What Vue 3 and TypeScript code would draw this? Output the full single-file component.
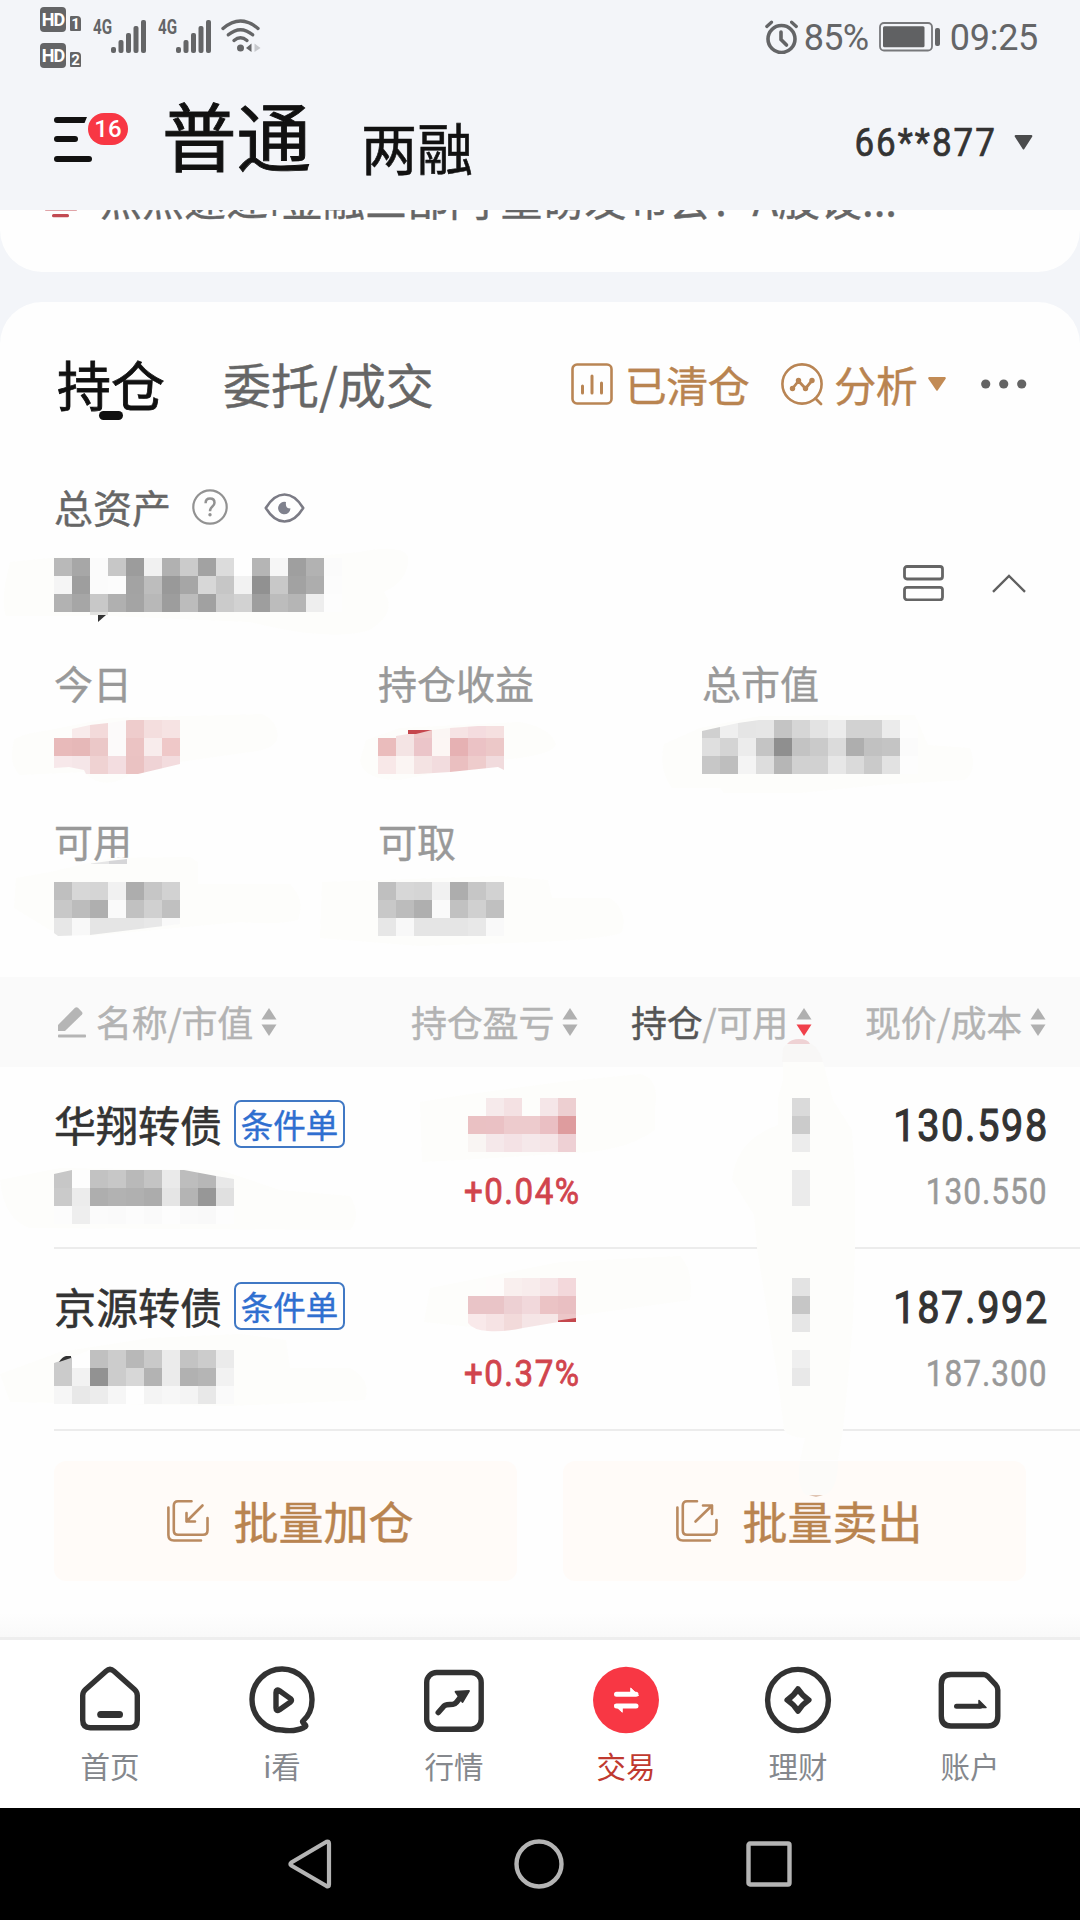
<script setup lang="ts">
import { h, type FunctionalComponent } from 'vue'

interface MosaicProps {
  rows: string[]
  clip?: string
}

const CELL = 18

// Pixelated block that hides a private value. Each row is a list of cell
// colours: two digits are a grey level, six digits a full colour, "-" is empty.
const Mosaic: FunctionalComponent<MosaicProps> = (props) => {
  const grid = props.rows.map((r) => r.split(' '))
  const width = Math.max(...grid.map((r) => r.length)) * CELL
  const height = grid.length * CELL
  const cells = grid.flatMap((row, y) =>
    row.map((c, x) =>
      c === '-'
        ? null
        : h('rect', {
            x: x * CELL,
            y: y * CELL,
            width: CELL,
            height: CELL,
            fill: '#' + (c.length === 2 ? c + c + c : c),
          }),
    ),
  )
  return h(
    'svg',
    {
      width,
      height,
      viewBox: `0 0 ${width} ${height}`,
      'shape-rendering': 'crispEdges',
      style: props.clip ? { clipPath: `path('${props.clip}')`, display: 'block' } : { display: 'block' },
    },
    cells,
  )
}
Mosaic.props = ['rows', 'clip']

const total = [
  'b9 a7 fb c7 9c f1 b1 cb a2 dc fe b5 f6 9f b2 fb',
  'f5 9e fb fc a3 bd 99 a6 d7 c6 f2 91 c8 a2 ad fc',
  'b2 a6 c8 b0 a4 b8 9d bc a1 cb d2 9e bc b5 ee fd',
]

const cash = ['bf d7 d5 f1 ad c6 d2', 'c8 bc af fa c1 d0 c0', 'e7 f8 e5 e5 e5 e8 f9']

interface Stat {
  label: string
  rows: string[]
  clip?: string
}

const stats: Stat[] = [
  {
    label: '今日',
    rows: [
      '- f8ebeb f3dada fcfafa eecccc f4dede f6e3e3',
      'e8baba e6b8b8 ebc8c8 fcfafa ebc3c3 f8ecec efc8c8',
      'f7e8ea f5e6e8 efd2d2 f3dde0 eac2c2 efd3d5 f3dcde',
    ],
    clip: 'M0 18H18V9L36 5L54 3L75 0H126V44L84 54H32L30 50L15 47L0 48Z',
  },
  {
    label: '持仓收益',
    rows: [
      '- f5e3e3 eecaca fbf6f4 f6e3e4 f4dcdf f5e0e0',
      'eabcbc f4e4e4 ebc5c9 fcf6f4 e6b1b3 ebc2c5 ecc8c8',
      'f8e8e8 fbf5f3 f4e3e3 f2dcde eabfc0 eecccc f1dbdd',
    ],
    clip: 'M0 18L18 16L54 10L72 8L100 6H126V50L120 47L72 52L40 54H0Z',
  },
  {
    label: '总市值',
    rows: [
      'd0 ef e5 e6 c4 d6 e3 ec d2 d2 eb fd',
      'df d4 ec c4 8f c3 ca db ae c1 c4 fb',
      'c7 be f4 dd b6 d1 d1 e7 da ca e2 fd',
    ],
    clip: 'M0 11L18 7L36 3L57 0H216V54H0Z',
  },
  { label: '可用', rows: cash, clip: 'M0 0H126V42L36 53L4 54L0 51Z' },
  { label: '可取', rows: cash },
]

interface Holding {
  name: string
  value: string[]
  valueClip: string
  profit: string[]
  profitClip?: string
  rate: string
  qty: string[]
  usable: string[]
  price: string
  cost: string
}

const holdings: Holding[] = [
  {
    name: '华翔转债',
    value: [
      'c7 fd c2 c7 b9 c4 ea bd b7 e8',
      'ca ec ae b2 b0 ac e5 b4 97 e0',
      'fc ee fb fa fc fa fd fa f9 fd',
    ],
    valueClip: 'M0 4L18 0H130L162 6L180 9V54H0Z',
    profit: [
      '- f6eaeb f4e1e3 - f5e6e8 edcfd1',
      'eac1c3 eac1c4 edcbcd edcbcd eabfc3 de9c9e',
      'f9f5f3 f5e8ea f4e2e5 f5e8ea f5e5e7 eed0d4',
    ],
    rate: '+0.04%',
    qty: ['da', 'cb', 'ec'],
    usable: ['eb', 'eb'],
    price: '130.598',
    cost: '130.550',
  },
  {
    name: '京源转债',
    value: [
      'cb fe c0 cc b8 c9 eb c3 cc eb',
      'cb f2 92 cc d7 b3 eb b1 b5 f2',
      'f6 e8 ec f6 fe f4 f7 f4 e8 fa',
    ],
    valueClip: 'M0 13L18 7L36 0H180V54H0Z',
    profit: [
      '- fefcfb f9efee f8ecec f6e5e7 f3d8db',
      'e9c4c7 e9c4c7 edd0d3 f1d8db ebc3c5 e9bfc2',
      'f9e9ea f6e3e4 f2dada f5e5e6 f6e7e7 ecc6c8',
    ],
    profitClip: 'M0 0H108V41L55 50Q38 54 20 53Q5 52 0 45Z',
    rate: '+0.37%',
    qty: ['e3', 'c6', 'e6'],
    usable: ['ef', 'e8'],
    price: '187.992',
    cost: '187.300',
  },
]

const tabs = ['首页', 'i看', '行情', '交易', '理财', '账户']
const signalBars = [6, 13, 20, 27, 33]
</script>

<template>
  <div class="screen">
    <div class="status">
      <div class="hd-col">
        <div v-for="n in 2" :key="n" class="hd-row">
          <span class="hd">HD</span>
          <span class="sim">{{ n }}</span>
        </div>
      </div>
      <div v-for="n in 2" :key="n" class="signal">
        <span class="net">4G</span>
        <svg width="36" height="34" viewBox="0 0 36 34">
          <rect v-for="(b, i) in signalBars" :key="i" :x="i * 7.5" :y="34 - b" width="5" :height="b" rx="2" fill="#646567" />
        </svg>
      </div>
      <svg class="wifi" width="40" height="34" viewBox="0 0 40 34" fill="none" stroke="#646567" stroke-width="3.4" stroke-linecap="round">
        <path d="M2 9.5Q19.500 -5.500 37 9.500" />
        <path d="M7.300 15.800Q19.500 5.500 31.700 15.800" />
        <path d="M13 21.500Q19.500 16 26 21.500" />
        <circle cx="19.500" cy="29" r="3.500" fill="#646567" stroke="none" />
        <path d="M30.500 24.500V33L25 29Z" fill="#646567" stroke="none" />
        <path d="M33.500 24.500V33L39.500 29Z" fill="#c6c8cc" stroke="none" />
      </svg>
      <div class="status-right">
        <svg width="34" height="34" viewBox="0 0 34 34" fill="none" stroke="#646567" stroke-linecap="round">
          <circle cx="16.500" cy="19" r="13.500" stroke-width="3.600" />
          <path d="M16 12V19.500L21.500 25" stroke-width="3.600" />
          <path d="M1.800 6.500L6.500 2.200M31.300 6.500L26.600 2.200" stroke-width="3.200" />
        </svg>
        <span class="pct">85%</span>
        <svg width="62" height="30" viewBox="0 0 62 30">
          <rect x="1" y="1" width="52" height="27.500" rx="4" fill="none" stroke="#77787b" stroke-width="1.800" />
          <rect x="4" y="4.200" width="41.500" height="21" rx="1.500" fill="#606163" />
          <rect x="56" y="6" width="5" height="18" rx="2" fill="#646567" />
        </svg>
        <span class="clock">09:25</span>
      </div>
    </div>

    <div class="header">
      <svg class="menu" width="40" height="48" viewBox="0 0 40 48" fill="#111">
        <path d="M3 1H33L30.500 7H3A3 3 0 0 1 3 1Z" />
        <rect y="20" width="24" height="6" rx="3" />
        <rect y="40" width="38" height="6" rx="3" />
      </svg>
      <span class="count">16</span>
      <span class="h-main">普通</span>
      <span class="h-sub">两融</span>
      <span class="account">66**877</span>
      <svg class="caret" width="19" height="15" viewBox="0 0 19 15"><path d="M1.500 0H17.500Q19 .5 18 2L10.300 14Q9.500 15 8.700 14L1 2Q0 .5 1.500 0Z" fill="#4a4b4d" /></svg>
    </div>

    <div class="notice">
      <div class="notice-line">
        <svg width="32" height="40" viewBox="0 0 32 40" fill="#c24a52">
          <rect x="4" y="6" width="24" height="24" rx="6" />
          <rect x="0" y="29" width="32" height="3.600" rx="1" />
          <rect x="7" y="36" width="17" height="3.300" rx="1.500" />
        </svg>
        <span>点点速递<i>|</i>金融三部门 重磅发布会！A股设...</span>
      </div>
    </div>

    <div class="card">
      <svg class="smudges" width="1080" height="1320" viewBox="0 302 1080 1320">
        <g fill="#fdfdfb">
          <path d="M10 562Q0 600 6 616H110L250 622Q330 642 370 630Q398 612 384 592Q410 580 408 556Q400 544 360 552L250 562L60 557Z" />
          <path d="M14 740Q20 734 50 730L110 718L262 714Q280 722 277 740Q272 750 250 752L180 762Q140 764 125 778Q100 790 84 772L20 775Q8 765 14 740Z" />
          <path d="M366 740L400 728L520 722Q552 728 556 745Q550 756 500 760L400 780Q362 780 360 760Z" />
          <path d="M664 744L700 728L760 716L915 715L928 745L970 748Q978 770 965 780L880 785L800 793H724L720 788H672Q658 770 664 744Z" />
          <path d="M16 878L50 872L110 858L190 857L198 862V884H290Q306 900 298 920Q280 925 240 922L90 936L50 930L14 908Z" />
          <path d="M322 882L500 876L548 880L552 898H610Q628 910 622 932Q615 938 540 942L420 946L320 938Z" />
          <path d="M0 1180L60 1168L220 1170L280 1190L350 1196Q362 1216 350 1230L30 1228Q4 1220 0 1180Z" />
          <path d="M420 1102L470 1094L560 1082L640 1074Q660 1078 655 1108V1130Q630 1148 590 1152L460 1160L422 1162Z" />
          <path d="M0 1374L60 1352L150 1338L240 1334L286 1340L290 1368H350Q372 1380 365 1400L230 1406L10 1402Z" />
          <path d="M430 1288L560 1262L680 1256Q694 1270 690 1300L560 1318L500 1330L424 1322Z" />
        </g>
        <path d="M783 1048Q790 1040 800 1040Q818 1042 823 1062H782Z" fill="#f8f7f6" />
        <path d="M787 1044Q791 1039 799 1039Q808 1039 810 1044Z" fill="#efd2d4" />
        <path d="M783 1062H823L833 1100L852 1130L855 1180V1248L853 1320L848 1380L843 1430L838 1460H800L805 1438Q790 1438 784 1430L778 1380L770 1330L757 1248L754 1215L732 1180Q736 1140 778 1125V1098L783 1080Z" fill="#fdfdfb" />
      </svg>

      <div class="tabs">
        <span class="tab-on">持仓<b class="pill"></b></span>
        <span class="tab-off">委托/成交</span>
        <svg class="ic-chart" width="42" height="42" viewBox="0 0 42 42" fill="none" stroke="#b98554" stroke-linecap="round">
          <rect x="1.500" y="1.500" width="39" height="39" rx="4.500" stroke-width="2.600" />
          <path d="M11.500 23V30M21 13V30M30.500 20V30" stroke-width="3" />
        </svg>
        <span class="gold">已清仓</span>
        <svg class="ic-search" width="43" height="43" viewBox="0 0 43 43" fill="none" stroke="#b98554" stroke-linecap="round" stroke-linejoin="round">
          <circle cx="21" cy="21" r="19.600" stroke-width="2.600" />
          <path d="M34.500 35.500L40 41" stroke-width="2.800" />
          <path d="M11.500 25.500L17.500 18L24.500 25.500L31 17.500" stroke-width="2.800" />
          <g fill="#b98554" stroke="none">
            <circle cx="11.500" cy="25.500" r="2.700" /><circle cx="17.500" cy="17.500" r="2.700" />
            <circle cx="24.500" cy="25.500" r="2.700" /><circle cx="31" cy="17.500" r="2.700" />
          </g>
        </svg>
        <span class="gold">分析</span>
        <svg class="gold-caret" width="18" height="14" viewBox="0 0 18 14"><path d="M1.200 0H16.800Q18.500 .5 17.500 2L9.800 13.200Q9 14.200 8.200 13.200L.5 2Q-.5 .5 1.200 0Z" fill="#c28b55" /></svg>
        <svg class="more" width="46" height="10" viewBox="0 0 46 10" fill="#646464">
          <circle cx="4.700" cy="5" r="4.600" /><circle cx="22.700" cy="5" r="4.600" /><circle cx="40.700" cy="5" r="4.600" />
        </svg>
      </div>

      <div class="asset-head">
        <span>总资产</span>
        <svg class="ic-help" width="36" height="36" viewBox="0 0 36 36" fill="none" stroke="#929292">
          <circle cx="18" cy="18" r="16.700" stroke-width="2.200" />
          <path d="M13.600 14.300Q13.600 9.600 18 9.600Q22.500 9.600 22.500 13.800Q22.500 16 20.200 17.800Q18 19.600 18 22.200" stroke-width="2.500" />
          <circle cx="18" cy="25.700" r="1.700" fill="#929292" stroke="none" />
        </svg>
        <svg class="ic-eye" width="41" height="30" viewBox="0 0 41 30" fill="none">
          <path d="M1.800 15Q10 1.500 20.500 1.500T39.200 15Q31 28.500 20.500 28.500T1.800 15Z" stroke="#7b7b85" stroke-width="2.600" stroke-linejoin="round" />
          <path d="M22 9.100A6.200 6.200 0 1 0 26.500 15.500Q21 15.500 22 9.100Z" fill="#7f818d" />
        </svg>
      </div>

      <div class="asset-total">
        <div class="total-mosaic">
          <Mosaic :rows="total" />
          <svg class="comma" width="18" height="12" viewBox="0 0 18 12">
            <path d="M0 0H18V3H0Z" fill="#e2e2e0" /><path d="M8 3H16L8 10Z" fill="#333" />
          </svg>
        </div>
        <svg class="ic-list" width="41" height="36" viewBox="0 0 41 36" fill="none" stroke="#656565" stroke-width="2.800">
          <rect x="1.500" y="1.500" width="38" height="12.500" rx="2.500" /><rect x="1.500" y="22.300" width="38" height="12.500" rx="2.500" />
        </svg>
        <svg class="ic-up" width="34" height="19" viewBox="0 0 34 19" fill="none" stroke="#606060" stroke-width="2.400"><path d="M1 17.800L17 2L33 17.800" /></svg>
      </div>

      <div class="stats">
        <div v-for="(s, i) in stats" :key="s.label" class="stat">
          <div class="stat-label">{{ s.label }}</div>
          <Mosaic class="stat-mosaic" :rows="s.rows" :clip="s.clip" />
          <svg v-if="i === 1" class="stat-mark red" width="24" height="4" viewBox="0 0 24 4"><path d="M0 0H24L8 4H0Z" fill="#c5474d" /></svg>
          <svg v-if="i === 3" class="stat-mark grey" width="36" height="5" viewBox="0 0 36 5"><path d="M0 4.500L18 2V5H0Z" fill="#e6e6e6" /><path d="M18 2L36 0V5H18Z" fill="#d6d6d8" /></svg>
        </div>
      </div>

      <div class="thead">
        <svg class="pencil" width="29" height="31" viewBox="0 0 29 31" fill="#b5b5b5">
          <path d="M0 18L17 .8Q18.500 -.5 20 .8L24 5Q25 6.300 24 7.500L7 24H0Z" /><rect y="27.500" width="28" height="3" rx=".8" />
        </svg>
        <span class="th th1">名称/市值</span>
        <svg class="sort" width="16" height="28" viewBox="0 0 16 28" fill="#b0b0b0"><path d="M8 0L15.500 11.500H.5Z" /><path d="M8 28L15.500 16.500H.5Z" /></svg>
        <span class="th th2">持仓盈亏</span>
        <svg class="sort" width="16" height="28" viewBox="0 0 16 28" fill="#b0b0b0"><path d="M8 0L15.500 11.500H.5Z" /><path d="M8 28L15.500 16.500H.5Z" /></svg>
        <span class="th th3"><b>持仓</b>/可用</span>
        <svg class="sort" width="16" height="28" viewBox="0 0 16 28" fill="#b0b0b0"><path d="M8 0L15.500 11.500H.5Z" /><path d="M8 28L15.500 16.500H.5Z" fill="#f0404a" /></svg>
        <span class="th th4">现价/成本</span>
        <svg class="sort" width="16" height="28" viewBox="0 0 16 28" fill="#b0b0b0"><path d="M8 0L15.500 11.500H.5Z" /><path d="M8 28L15.500 16.500H.5Z" /></svg>
      </div>

      <div v-for="(r, i) in holdings" :key="r.name" class="row" :class="{ second: i === 1 }">
        <div class="c-name">
          <div class="name-line"><span class="name">{{ r.name }}</span><span class="tag">条件单</span></div>
          <Mosaic class="value" :rows="r.value" :clip="r.valueClip" />
          <svg v-if="i === 1" class="mark-val" width="12" height="6" viewBox="0 0 12 6"><path d="M0 6Q3 1 7 0H12V2Z" fill="#333" /></svg>
        </div>
        <div class="c-profit">
          <Mosaic :rows="r.profit" :clip="r.profitClip" />
          <svg v-if="i === 1" class="mark-pro" width="18" height="4" viewBox="0 0 18 4"><path d="M0 2.500L18 0V4H0Z" fill="#c4474d" /></svg>
          <span class="rate">{{ r.rate }}</span>
        </div>
        <div class="c-qty">
          <Mosaic :rows="r.qty" />
          <Mosaic :rows="r.usable" />
        </div>
        <div class="c-price">
          <span class="price">{{ r.price }}</span>
          <span class="cost">{{ r.cost }}</span>
        </div>
      </div>

      <div class="actions">
        <div class="action">
          <svg width="42" height="42" viewBox="0 0 42 42" fill="none" stroke="#ba8a60" stroke-width="2.600" stroke-linecap="round" stroke-linejoin="round">
            <path d="M24.500 1.300H11Q6.800 1.300 6.800 5.500V30.500Q6.800 34.800 11 34.800H36Q40.500 34.800 40.500 30.500V18" /><path d="M1.400 7.500V35Q1.400 40.500 7 40.500H34" /><path d="M35.500 5.500L19.500 21.500M19.500 13V21.500H28" />
          </svg>
          <span>批量加仓</span>
        </div>
        <div class="action sell">
          <svg width="42" height="42" viewBox="0 0 42 42" fill="none" stroke="#ba8a60" stroke-width="2.600" stroke-linecap="round" stroke-linejoin="round">
            <path d="M21 1.300H11Q6.800 1.300 6.800 5.500V30.500Q6.800 34.800 11 34.800H36Q40.500 34.800 40.500 30.500V20" /><path d="M1.400 7.500V35Q1.400 40.500 7 40.500H34" /><path d="M19.500 21.500L36 5.500M27 5.500H36V14" />
          </svg>
          <span>批量卖出</span>
          <svg class="drip" width="40" height="38" viewBox="0 0 40 38">
            <path d="M2 0H40Q40 30 26 34H8Q-2 26 2 0Z" fill="#fcfbf9" /><path d="M11 34H25L18 36Z" fill="#dfc4b2" />
          </svg>
        </div>
      </div>
      <div class="fade"></div>
    </div>

    <div class="tabbar">
      <div v-for="(t, i) in tabs" :key="t" class="tab" :class="{ active: i === 3 }">
        <svg width="70" height="70" viewBox="0 0 70 70" fill="none" stroke="#323232" stroke-width="5.400" stroke-linecap="round" stroke-linejoin="round">
          <template v-if="i === 0">
            <path d="M31 6.200Q35 2.600 39 6.200L59.500 24.500Q62.300 27 62.300 30.500V55Q62.300 62.700 54.600 62.700H15.400Q7.700 62.700 7.700 55V30.500Q7.700 27 10.500 24.500Z" /><path d="M25.700 49.500H44.500" stroke-width="7" />
          </template>
          <template v-else-if="i === 1">
            <path d="M56 56Q65 48 65 35A30 30.500 0 1 0 35 65Q48 67 57 62.500Q60 61.500 58 59.500Q54.500 56.500 56 56Z" /><path d="M29 27.500V43Q29 47 32.500 44.800L43.500 37Q45.500 35.300 43.500 33.600L32.500 25.800Q29 23.500 29 27.500Z" />
          </template>
          <template v-else-if="i === 2">
            <rect x="7.700" y="7.500" width="54.500" height="56.700" rx="10" /><path d="M19.300 47.500L25 41Q26 40 28 39.800L34 39.300Q36 39 37.500 37.200L42.500 31" stroke-width="5.600" /><path d="M36.500 26.700L50 26L43.500 37Z" fill="#323232" stroke-width="1.800" />
          </template>
          <template v-else-if="i === 3">
            <ellipse cx="35" cy="35" rx="33" ry="33.200" fill="#f83744" stroke="none" /><path d="M25.500 29.300H45M45 41H25.500" stroke="#fff" stroke-width="5" /><path d="M40 23.300L47.500 30.500H40ZM31 47L23.500 40H31Z" fill="#fff" stroke="#fff" stroke-width="1" />
          </template>
          <template v-else-if="i === 4">
            <ellipse cx="35" cy="35" rx="30.400" ry="30.600" /><path d="M35 24Q39 30.500 45.800 35Q39 39.500 35 46Q31 39.500 24.200 35Q31 30.500 35 24Z" stroke-width="5.600" />
          </template>
          <template v-else>
            <path d="M16 9.500H48.500Q51 9.500 53 11.500L60.500 19.500Q62.800 22 62.800 25V51Q62.800 61 53 61H16Q6.300 61 6.300 51V19.500Q6.300 9.500 16 9.500Z" /><path d="M21.500 41.200H45" stroke-width="5" /><path d="M44 35.500L51 42.500H44Z" fill="#323232" stroke-width="1.500" />
          </template>
        </svg>
        <span>{{ t }}</span>
      </div>
    </div>

    <div class="sysnav">
      <svg width="44" height="50" viewBox="0 0 44 50" fill="none" stroke="#b4b4b4" stroke-width="4.200" stroke-linejoin="round"><path d="M38.500 2.800Q41 1.800 41 4.500V45.500Q41 48.200 38.500 47L3.300 26.500Q1.500 25 3.300 23.500Z" /></svg>
      <svg width="50" height="50" viewBox="0 0 50 50" fill="none" stroke="#b4b4b4" stroke-width="4.400"><circle cx="25" cy="25" r="22.500" /></svg>
      <svg width="46" height="46" viewBox="0 0 46 46" fill="none" stroke="#b4b4b4" stroke-width="4.400"><rect x="2.500" y="2.500" width="41" height="41" rx="1.500" /></svg>
    </div>
  </div>
</template>

<style>
body {
  margin: 0;
  background: #f3f5f9;
}
</style>

<style scoped>
.screen {
  width: 1080px;
  height: 1920px;
  overflow: hidden;
  background: #f3f5f9;
  font-family: 'Noto Sans CJK SC', sans-serif;
  display: flex;
  flex-direction: column;
  white-space: nowrap;
}
.screen svg {
  display: block;
  flex: none;
}
.status {
  height: 76px;
  flex: none;
  display: flex;
  align-items: flex-start;
  padding-left: 40px;
  font-family: Roboto, sans-serif;
  color: #646567;
}
.hd-col {
  width: 53px;
  padding-top: 7px;
}
.hd-row {
  display: flex;
  align-items: flex-end;
  gap: 4px;
  height: 36px;
}
.hd {
  width: 26px;
  height: 25px;
  border-radius: 4px;
  background: #646567;
  color: #fff;
  font: 700 18px/26px Roboto, sans-serif;
  letter-spacing: -1px;
  text-align: center;
  align-self: flex-start;
}
.sim {
  width: 11px;
  height: 15px;
  margin-bottom: 12px;
  border-radius: 1px 4px 1px 1px;
  background: #646567;
  color: #fff;
  font: 700 15px/16px Roboto, sans-serif;
  text-align: center;
}
.signal {
  display: flex;
  width: 65px;
  padding-top: 18px;
}
.net {
  width: 18px;
  font: 700 20px/19px Roboto, sans-serif;
  transform: scaleX(0.76);
  transform-origin: left;
}
.signal svg {
  margin-top: 1px;
}
.wifi {
  margin: 19px 0 0 -2px;
}
.status-right {
  margin-left: auto;
  margin-right: 42px;
  margin-top: 19px;
  display: flex;
  align-items: center;
  height: 36px;
  font-size: 36px;
  line-height: 36px;
}
.pct {
  width: 75px;
  margin-left: 5px;
  margin-top: 1px;
  letter-spacing: -0.8px;
}
.clock {
  margin-left: 9px;
  margin-top: 1px;
  letter-spacing: -0.3px;
}
.header {
  height: 134px;
  flex: none;
  display: flex;
  align-items: flex-start;
  padding-left: 54px;
  color: #111;
}
.menu {
  margin-top: 40px;
}
.count {
  width: 40px;
  height: 32px;
  margin: 37px 0 0 -6px;
  border-radius: 16px;
  background: #f83744;
  color: #fff;
  font: 500 24px/33px Roboto, sans-serif;
  text-align: center;
}
.h-main {
  margin: 21px 0 0 34px;
  font-size: 74.5px;
  line-height: 74px;
  -webkit-text-stroke: 0.9px;
}
.h-sub {
  margin: 42px 0 0 50px;
  font-size: 56px;
  line-height: 56px;
  -webkit-text-stroke: 0.6px;
}
.account {
  margin: 45px -2px 0 auto;
  font: 400 38px/44px Roboto, sans-serif;
  -webkit-text-stroke: 0.7px;
  letter-spacing: 2.2px;
  transform: scaleX(0.92);
  transform-origin: right;
  color: #333;
}
.caret {
  margin: 59px 47px 0 19px;
}
.notice {
  height: 62px;
  flex: none;
  background: #fefefe;
  border-radius: 0 0 42px 42px;
  overflow: hidden;
}
.notice-line {
  display: flex;
  margin-top: -32px;
  padding-left: 45px;
  color: #666;
  font-size: 42px;
  line-height: 42px;
  -webkit-text-stroke: 0.4px;
}
.notice-line span {
  margin: -1px 0 0 23px;
}
.notice-line i {
  display: inline-block;
  width: 13px;
  height: 34px;
  overflow: hidden;
  font-style: normal;
  text-align: center;
}
.card {
  position: relative;
  flex: none;
  height: 1335px;
  margin-top: 30px;
  background: #fefefe;
  border-radius: 42px 42px 0 0;
  overflow: hidden;
  display: flex;
  flex-direction: column;
  -webkit-text-stroke: 0.4px;
}
.smudges {
  position: absolute;
  left: 0;
  top: 0;
  z-index: 1;
}
.tabs {
  height: 164px;
  flex: none;
  display: flex;
  align-items: center;
  padding-left: 58px;
  box-sizing: border-box;
}
.tab-on {
  position: relative;
  font-size: 54px;
  line-height: 54px;
  color: #111;
  margin-left: -1px;
  margin-top: 0;
  -webkit-text-stroke: 0.8px;
}
.pill {
  position: absolute;
  left: 42px;
  top: 54px;
  width: 24px;
  height: 9px;
  border-radius: 5px;
  background: #111;
}
.tab-off {
  margin: -3px 0 0 58px;
  font-size: 48px;
  line-height: 48px;
  color: #666;
}
.gold {
  font-size: 42px;
  line-height: 42px;
  color: #b98450;
  letter-spacing: -0.5px;
  margin-top: 0;
}
.ic-chart {
  margin-left: 137px;
}
.ic-chart + .gold {
  margin-left: 12px;
}
.ic-search {
  margin-left: 32px;
}
.ic-search + .gold {
  margin-left: 10px;
}
.gold-caret {
  margin-left: 11px;
}
.more {
  margin-left: auto;
  margin-right: 53px;
}
.asset-head {
  height: 40px;
  margin-top: 21px;
  flex: none;
  display: flex;
  align-items: center;
  padding-left: 54px;
  font-size: 39px;
  line-height: 36px;
  color: #666;
}
.asset-head span {
  margin-top: -2px;
}
.ic-help {
  margin-left: 21px;
}
.ic-eye {
  margin-left: 36px;
  margin-top: 1px;
}
.asset-total {
  height: 54px;
  margin-top: 31px;
  flex: none;
  display: flex;
  align-items: center;
  padding-left: 54px;
}
.total-mosaic {
  position: relative;
  z-index: 2;
}
.comma {
  position: absolute;
  left: 36px;
  top: 54px;
}
.ic-list {
  margin-left: auto;
  margin-top: -4px;
}
.ic-up {
  margin: -4px 54px 0 48px;
}
.stats {
  height: 365px;
  flex: none;
  display: grid;
  grid-template-columns: 324px 324px 324px;
  grid-template-rows: 162px 162px;
  padding: 50px 0 0 54px;
  box-sizing: border-box;
}
.stat {
  position: relative;
}
.stat-label {
  height: 40px;
  font-size: 39px;
  line-height: 41px;
  color: #999;
}
.stat-mosaic {
  position: relative;
  z-index: 2;
  margin-top: 18px;
}
.stat:nth-child(n + 4) .stat-label {
  margin-top: -4px;
}
.stat:nth-child(n + 4) .stat-mosaic {
  margin-top: 22px;
}
.stat-mark {
  position: absolute;
  z-index: 2;
}
.stat-mark.red {
  left: 30px;
  top: 68px;
}
.stat-mark.grey {
  left: 37px;
  top: 35px;
}
.thead {
  height: 90px;
  flex: none;
  display: flex;
  align-items: center;
  padding-left: 58px;
  background: #fafafa;
  font-size: 36px;
  line-height: 36px;
  color: #b3b3b3;
}
.th {
  margin-top: -2px;
  letter-spacing: -0.2px;
}
.th b {
  font-weight: 400;
  color: #555;
}
.th1 {
  margin-left: 9px;
  width: 165px;
}
.th2 {
  margin-left: 134px;
  width: 151px;
}
.th3 {
  margin-left: 53px;
  width: 165px;
}
.th4 {
  margin-left: 53px;
  width: 165px;
}
.row {
  height: 180px;
  flex: none;
  margin-left: 54px;
  border-bottom: 2px solid #ececec;
  display: flex;
}
.row .c-name {
  position: relative;
  width: 414px;
}
.name-line {
  display: flex;
  height: 48px;
  margin-top: 33px;
}
.name {
  font-size: 42px;
  line-height: 47px;
  color: #333;
  -webkit-text-stroke: 0.6px;
}
.tag {
  box-sizing: border-box;
  width: 111px;
  height: 48px;
  margin-left: 12px;
  border: 2px solid #4078c4;
  border-radius: 7px;
  color: #2f6fd0;
  font-size: 32.5px;
  line-height: 43px;
  text-align: center;
}
.value {
  position: relative;
  z-index: 2;
  margin-top: 22px;
}
.mark-val {
  position: absolute;
  z-index: 2;
  left: 5px;
  top: 107px;
}
.c-profit {
  position: relative;
  z-index: 2;
  width: 324px;
  padding-top: 31px;
}
.mark-pro {
  position: absolute;
  left: 90px;
  top: 69px;
}
.rate {
  display: block;
  margin: 19px 0 0 -4px;
  font: 400 36px/42px Roboto, sans-serif;
  -webkit-text-stroke: 0.8px;
  letter-spacing: 1.6px;
  color: #d1444d;
  transform: scaleX(0.92);
  transform-origin: left;
}
.c-qty {
  position: relative;
  z-index: 2;
  width: 18px;
  padding-top: 31px;
  display: flex;
  flex-direction: column;
  gap: 18px;
}
.c-price {
  position: relative;
  z-index: 2;
  margin-left: auto;
  margin-right: 33px;
  padding-top: 32px;
  display: flex;
  flex-direction: column;
  align-items: flex-end;
  font-family: Roboto, sans-serif;
}
.price {
  font-size: 45px;
  line-height: 54px;
  color: #333;
  -webkit-text-stroke: 1.1px;
  letter-spacing: 1.9px;
  margin-right: -2px;
  transform: scaleX(0.88);
  transform-origin: right;
}
.cost {
  margin-top: 18px;
  font-size: 36px;
  line-height: 42px;
  color: #999;
  -webkit-text-stroke: 0.5px;
  letter-spacing: 1.1px;
  margin-right: -1px;
  transform: scaleX(0.88);
  transform-origin: right;
}
.second .c-profit,
.second .c-qty {
  padding-top: 29px;
}
.second .value {
  margin-top: 20px;
}
.second .rate {
  margin-top: 21px;
}
.actions {
  display: flex;
  gap: 46px;
  margin: 30px 0 0 54px;
  flex: none;
}
.action {
  width: 463px;
  height: 120px;
  box-sizing: border-box;
  padding-left: 10px;
  border-radius: 12px;
  background: #fffbf8;
  display: flex;
  align-items: center;
  justify-content: center;
  gap: 24px;
  color: #b98450;
  font-size: 45px;
  line-height: 45px;
}
.action span {
  margin-top: -2px;
}
.sell {
  position: relative;
}
.drip {
  position: absolute;
  left: 235px;
  top: 0;
}
.fade {
  margin-top: auto;
  height: 24px;
  background: linear-gradient(#fefefe, #f9f9f9);
}
.tabbar {
  height: 168px;
  flex: none;
  border-top: 3px solid #eee;
  background: #fff;
  display: flex;
  padding: 0 24px;
}
.tab {
  width: 172px;
  display: flex;
  flex-direction: column;
  align-items: center;
  color: #85888d;
  font-size: 29.5px;
  line-height: 32px;
}
.tab svg {
  margin-top: 25px;
}
.tab span {
  margin-top: 14px;
}
.tab.active {
  color: #c0392f;
}
.sysnav {
  height: 112px;
  flex: none;
  background: #000;
  display: flex;
  align-items: center;
  justify-content: space-between;
  padding: 0 288px 0 288px;
}
</style>
